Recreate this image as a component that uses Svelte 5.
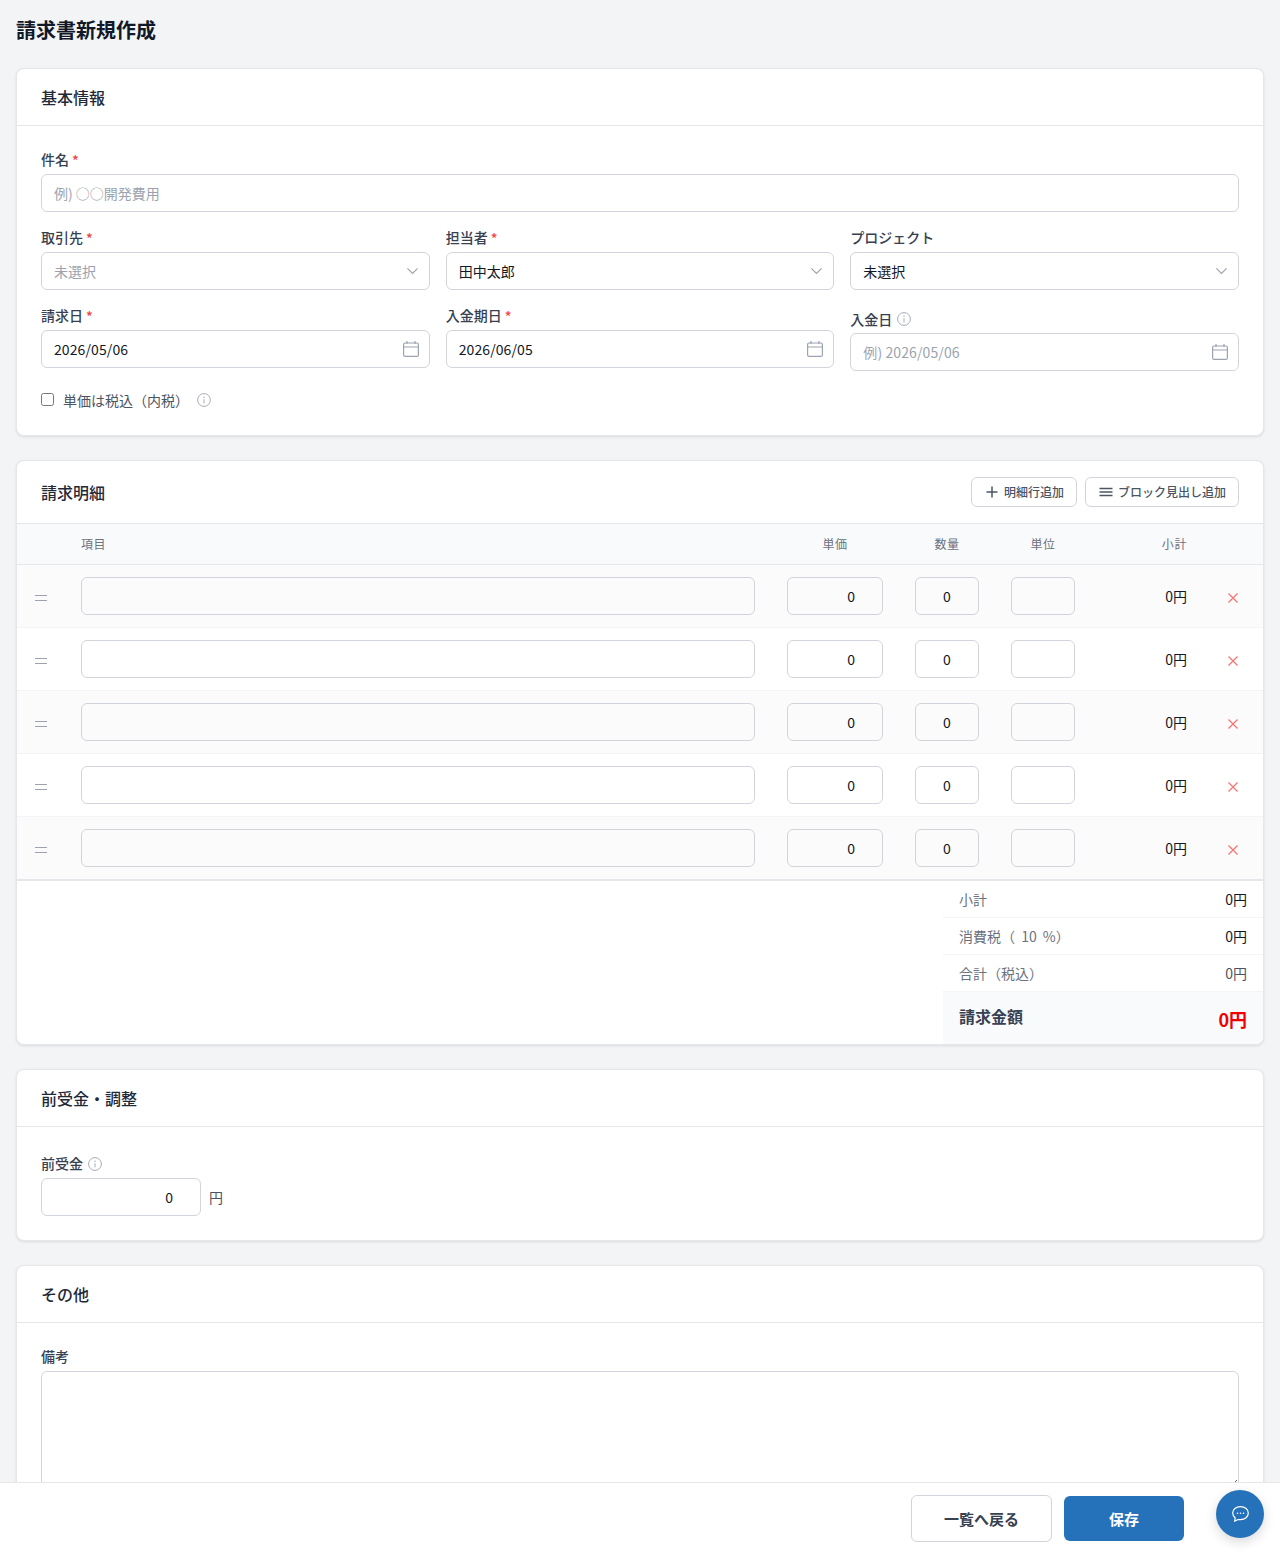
<script>
  const rows = [0, 1, 2, 3, 4];
</script>

<div class="page">
  <main class="scroll">
    <h1>請求書新規作成</h1>

    <section class="card">
      <header class="card-head"><h2>基本情報</h2></header>
      <div class="card-body">
        <div class="field">
          <span class="label">件名 <i class="req">*</i></span>
          <input class="input" placeholder="例) ○○開発費用" />
        </div>
        <div class="grid3">
          <div class="field">
            <span class="label">取引先 <i class="req">*</i></span>
            <div class="control"><span class="ctl-text ph">未選択</span>
              <svg class="chev" viewBox="0 0 11 6"><path d="M0.400 0.400 5.500 5.500 10.600 0.400" /></svg></div>
          </div>
          <div class="field">
            <span class="label">担当者 <i class="req">*</i></span>
            <div class="control"><span class="ctl-text">田中太郎</span>
              <svg class="chev" viewBox="0 0 11 6"><path d="M0.400 0.400 5.500 5.500 10.600 0.400" /></svg></div>
          </div>
          <div class="field">
            <span class="label">プロジェクト</span>
            <div class="control"><span class="ctl-text">未選択</span>
              <svg class="chev" viewBox="0 0 11 6"><path d="M0.400 0.400 5.500 5.500 10.600 0.400" /></svg></div>
          </div>
          <div class="field">
            <span class="label">請求日 <i class="req">*</i></span>
            <div class="control"><span class="ctl-text date">2026/05/06</span>
              <svg class="cal" viewBox="0 0 16 16"><rect x="0.600" y="2" width="14.800" height="13.400" rx="1.500" /><path d="M0.600 6H15.400M4 0V3M12 0V3" /></svg></div>
          </div>
          <div class="field">
            <span class="label">入金期日 <i class="req">*</i></span>
            <div class="control"><span class="ctl-text date">2026/06/05</span>
              <svg class="cal" viewBox="0 0 16 16"><rect x="0.600" y="2" width="14.800" height="13.400" rx="1.500" /><path d="M0.600 6H15.400M4 0V3M12 0V3" /></svg></div>
          </div>
          <div class="field">
            <span class="label tall">入金日
              <svg class="info" viewBox="0 0 14 14"><circle cx="7" cy="7" r="6.400" /><path d="M7 6.200V10.400" /><circle class="dot" cx="7" cy="4.200" r="0.700" /></svg>
            </span>
            <div class="control"><span class="ctl-text ph date">例) 2026/05/06</span>
              <svg class="cal" viewBox="0 0 16 16"><rect x="0.600" y="2" width="14.800" height="13.400" rx="1.500" /><path d="M0.600 6H15.400M4 0V3M12 0V3" /></svg></div>
          </div>
        </div>
        <div class="check-row">
          <input type="checkbox" class="check" />
          <span class="check-label">単価は税込（内税）</span>
          <svg class="info low" viewBox="0 0 14 14"><circle cx="7" cy="7" r="6.400" /><path d="M7 6.200V10.400" /><circle class="dot" cx="7" cy="4.200" r="0.700" /></svg>
        </div>
      </div>
    </section>

    <section class="card">
      <header class="card-head between">
        <h2>請求明細</h2>
        <div class="head-actions">
          <button class="mini">
            <svg class="mini-ic" viewBox="0 0 12 12"><path d="M6 0.500V11.500M0.500 6H11.500" /></svg>明細行追加
          </button>
          <button class="mini">
            <svg class="mini-ic wide" viewBox="0 0 14 12"><path d="M0.500 2.500H13.500M0.500 6H13.500M0.500 9.500H13.500" /></svg>ブロック見出し追加
          </button>
        </div>
      </header>
      <div class="tr thead">
        <span></span>
        <span class="th-left">項目</span>
        <span class="th-c">単価</span>
        <span class="th-c">数量</span>
        <span class="th-c">単位</span>
        <span class="th-r">小計</span>
        <span></span>
      </div>
      {#each rows as r}
        <div class="tr row" class:odd={r % 2 === 0}>
          <span class="handle"><svg viewBox="0 0 12 6"><path d="M0 0.500H12M0 5.500H12" /></svg></span>
          <span class="cell"><input class="input tinput" /></span>
          <span class="cell"><input class="input tinput num" value="0" /></span>
          <span class="cell"><input class="input tinput center" value="0" /></span>
          <span class="cell"><input class="input tinput" /></span>
          <span class="sub">0円</span>
          <span class="del"><svg viewBox="0 0 10 10"><path d="M0.500 0.500 9.500 9.500M9.500 0.500 0.500 9.500" /></svg></span>
        </div>
      {/each}
      <div class="totals-wrap">
        <div class="totals">
          <div class="t-row"><span>小計</span><b>0円</b></div>
          <div class="t-row"><span class="tax">消費税（ 10 %）</span><b>0円</b></div>
          <div class="t-row"><span>合計（税込）</span><b class="muted">0円</b></div>
          <div class="t-grand"><span>請求金額</span><b>0円</b></div>
        </div>
      </div>
    </section>

    <section class="card">
      <header class="card-head"><h2>前受金・調整</h2></header>
      <div class="card-body">
        <div class="field">
          <span class="label tall adv-label">前受金
            <svg class="info" viewBox="0 0 14 14"><circle cx="7" cy="7" r="6.400" /><path d="M7 6.200V10.400" /><circle class="dot" cx="7" cy="4.200" r="0.700" /></svg>
          </span>
          <div class="advance">
            <input class="input num adv-input" value="0" />
            <span class="yen">円</span>
          </div>
        </div>
      </div>
    </section>

    <section class="card">
      <header class="card-head"><h2>その他</h2></header>
      <div class="card-body">
        <div class="field">
          <span class="label">備考</span>
          <textarea class="input area"></textarea>
        </div>
      </div>
    </section>
  </main>

  <footer class="bar">
    <button class="btn ghost">一覧へ戻る</button>
    <button class="btn primary">保存</button>
    <span class="bar-space"></span>
  </footer>

  <button class="fab" aria-label="chat">
    <svg viewBox="0 0 17 16"><path d="M8.500 0.700C4 0.700 0.700 3.500 0.700 7.100c0 2 1 3.700 2.500 4.800l-.5 3.200 3.500-1.600c.7.100 1.500.200 2.300.200 4.500 0 7.800-2.900 7.800-6.600S13 0.700 8.500 0.700Z" /><circle class="d" cx="5.500" cy="7.300" r=".8" /><circle class="d" cx="8.500" cy="7.300" r=".8" /><circle class="d" cx="11.500" cy="7.300" r=".8" /></svg>
  </button>
</div>

<style>
  :global(body) {
    margin: 0;
    background: #f3f4f6;
    font-family: "Noto Sans CJK JP", "Noto Sans", sans-serif;
    color: #111827;
  }
  * { box-sizing: border-box; }
  .page {
    position: relative;
    height: 100vh;
    display: flex;
    flex-direction: column;
    overflow: hidden;
  }
  .scroll {
    flex: 1;
    min-height: 0;
    overflow: hidden;
    padding: 16px;
  }
  h1 {
    margin: 0 0 24px;
    font-size: 20px;
    line-height: 28px;
    font-weight: 700;
    color: #111827;
  }
  .card {
    background: #fff;
    border: 1px solid #e5e7eb;
    border-radius: 8px;
    box-shadow: 0 1px 3px rgba(0, 0, 0, 0.1);
    margin-bottom: 24px;
    overflow: hidden;
  }
  .card-head {
    padding: 16px 24px;
    border-bottom: 1px solid #e5e7eb;
  }
  .between {
    display: flex;
    align-items: center;
    justify-content: space-between;
  }
  h2 {
    margin: 0;
    font-size: 16px;
    line-height: 24px;
    font-weight: 500;
    color: #1f2937;
  }
  .card-body { padding: 24px; }
  .field { display: flex; flex-direction: column; min-width: 0; }
  .label {
    display: flex;
    align-items: flex-start;
    gap: 3px;
    height: 20px;
    font-size: 14px;
    line-height: 18px;
    font-weight: 500;
    color: #374151;
    margin-bottom: 4px;
  }
  .label.tall {
    align-items: center;
    height: 23px;
    line-height: 20px;
    padding-top: 3px;
    gap: 5px;
  }
  .label.tall .info { margin-top: -1px; }
  .label.adv-label { padding-top: 1px; gap: 5px; }
  .label.adv-label .info { margin-top: 1px; }
  .req { color: #ef4444; font-style: normal; line-height: 20px; }
  .input {
    width: 100%;
    height: 38px;
    padding: 0 12px;
    border: 1px solid #d1d5db;
    border-radius: 6px;
    background: #fff;
    font: inherit;
    font-size: 14px;
    color: #111827;
    outline: none;
  }
  .input::placeholder { color: #9ca3af; opacity: 1; }
  .grid3 {
    display: grid;
    grid-template-columns: repeat(3, 1fr);
    gap: 16px;
    margin-top: 16px;
    align-items: start;
  }
  .control {
    height: 38px;
    padding: 0 12px;
    border: 1px solid #d1d5db;
    border-radius: 6px;
    background: #fff;
    display: flex;
    align-items: center;
    justify-content: space-between;
    font-size: 14px;
    color: #111827;
  }
  .ph { color: #9ca3af; }
  .date { letter-spacing: 0.1px; }
  .chev { width: 11px; height: 6px; fill: none; stroke: #9ca3af; stroke-width: 1.100; margin-right: -1px; }
  .cal { width: 16px; height: 16px; fill: none; stroke: #9ca3af; stroke-width: 1.200; margin-right: -2px; }
  .info { width: 14px; height: 14px; fill: none; stroke: #9ca3af; stroke-width: 0.900; flex: none; }
  .info .dot { fill: #9ca3af; stroke: none; }
  .info.low { margin-top: 2px; }
  .check-row {
    display: flex;
    align-items: center;
    height: 24px;
    margin-top: 16px;
  }
  .check {
    width: 13px;
    height: 13px;
    margin: 0 9px 0 0;
  }
  .check-label { font-size: 14px; color: #4b5563; margin: 2px 8px 0 0; }
  .head-actions { display: flex; gap: 8px; }
  .mini {
    height: 30px;
    padding: 0 12px 2px;
    display: flex;
    align-items: center;
    gap: 6px;
    border: 1px solid #d1d5db;
    border-radius: 6px;
    background: #fff;
    font: inherit;
    font-size: 12px;
    font-weight: 500;
    color: #4b5563;
  }
  .mini-ic { width: 12px; height: 12px; fill: none; stroke: #4b5563; stroke-width: 1.500; margin: 2px 0 0 2px; }
  .mini-ic.wide { width: 14px; margin: 2px -1px 0 1px; stroke-width: 1.300; }
  .tr {
    display: grid;
    grid-template-columns: 48px 1fr 128px 96px 96px 112px 60px;
    align-items: center;
  }
  .thead {
    height: 41px;
    padding-bottom: 2px;
    background: #f9fafb;
    border-bottom: 1px solid #e5e7eb;
    font-size: 12px;
    letter-spacing: 0.6px;
    color: #6b7280;
  }
  .th-left { padding-left: 16px; }
  .th-c { text-align: center; }
  .th-r { text-align: right; padding-right: 16px; }
  .row {
    height: 63px;
    border-bottom: 1px solid #f3f4f6;
    background: #fff;
  }
  .row.odd { background: #fbfbfc; }
  .tinput { background: transparent; }
  .row:nth-last-child(2) { border-bottom: 2px solid #e5e7eb; height: 64px; }
  .handle { display: flex; justify-content: center; }
  .handle svg { width: 12px; height: 6px; fill: none; stroke: #9ca3af; stroke-width: 1; margin-top: 3px; }
  .cell { padding: 0 16px; display: block; margin-top: -1px; }
  .num { text-align: right; padding-right: 27px; }
  .center { text-align: center; }
  .sub { text-align: right; padding-right: 16px; font-size: 14px; margin-top: -1px; }
  .del { display: flex; justify-content: center; padding-top: 4px; }
  .del svg { width: 10px; height: 10px; fill: none; stroke: #f87171; stroke-width: 1.200; }
  .totals-wrap { display: flex; justify-content: flex-end; }
  .totals { width: 320px; font-size: 14px; }
  .t-row {
    height: 37px;
    padding: 0 16px;
    display: flex;
    align-items: center;
    justify-content: space-between;
    border-bottom: 1px solid #f3f4f6;
    color: #6b7280;
  }
  .tax { word-spacing: 3px; }
  .t-row b { font-weight: 400; color: #111827; }
  .t-row b.muted { color: #4b5563; }
  .t-grand {
    height: 52px;
    padding: 12px 16px;
    background: #f9fafb;
    display: flex;
    align-items: flex-start;
    justify-content: space-between;
  }
  .t-grand span { font-size: 16px; line-height: 24px; font-weight: 700; color: #374151; }
  .t-grand b { font-size: 18px; line-height: 30px; font-weight: 700; color: #ef0000; }
  .advance { display: flex; align-items: center; gap: 8px; }
  .adv-input { width: 160px; }
  .yen { font-size: 14px; color: #4b5563; }
  .area { height: 118px; padding: 8px 12px; resize: vertical; display: block; }
  .bar {
    flex: none;
    height: 72px;
    background: #fff;
    border-top: 1px solid #e5e7eb;
    display: flex;
    align-items: center;
    justify-content: flex-end;
    padding-right: 16px;
    position: relative;
  }
  .bar-space { width: 80px; }
  .btn {
    font: inherit;
    font-size: 15px;
    font-weight: 700;
    border-radius: 6px;
  }
  .ghost {
    width: 141px;
    height: 47px;
    background: #fff;
    border: 1px solid #d1d5db;
    color: #374151;
    margin-right: 12px;
  }
  .primary {
    width: 120px;
    height: 45px;
    background: #2672ba;
    border: none;
    color: #fff;
  }
  .fab {
    position: absolute;
    right: 16px;
    bottom: 16px;
    width: 48px;
    height: 48px;
    border: none;
    border-radius: 50%;
    background: #2672ba;
    box-shadow: 0 4px 12px rgba(0, 0, 0, 0.15);
    display: flex;
    align-items: center;
    justify-content: center;
    padding: 0;
  }
  .fab svg { width: 17px; height: 16px; fill: none; stroke: #fff; stroke-width: 1.200; }
  .fab .d { fill: #fff; stroke: none; }
</style>
